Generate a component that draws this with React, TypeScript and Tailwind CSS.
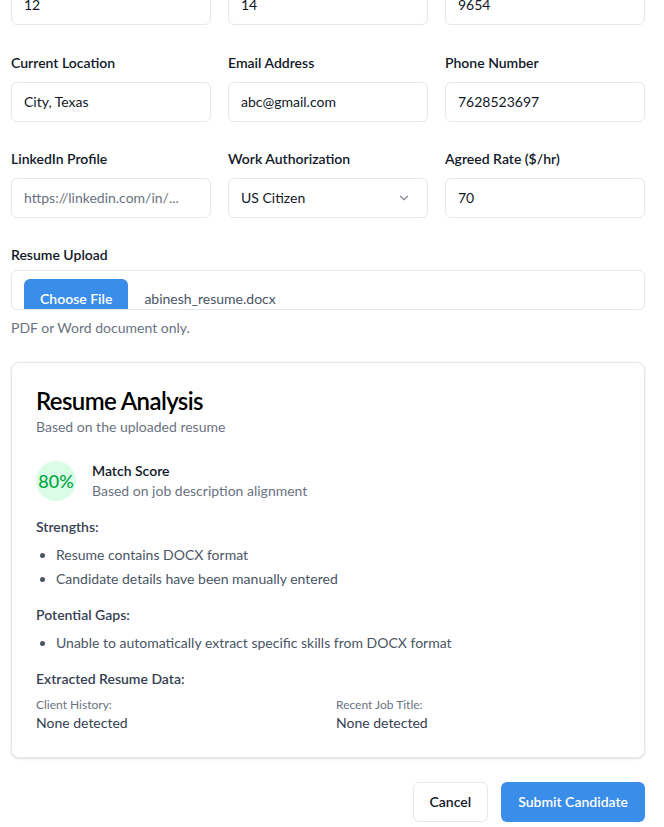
import { ChevronDown } from "lucide-react";

const FONT = "[font-family:'Segoe_UI',Lato,'Noto_Sans',sans-serif]";

function Field({ label, children }: { label: string; children: React.ReactNode }) {
  return (
    <div className="flex flex-col">
      <label className="text-sm font-semibold text-gray-900 leading-5 mb-[9px]">{label}</label>
      {children}
    </div>
  );
}

function TextBox({ value, placeholder }: { value?: string; placeholder?: string }) {
  return (
    <div className="h-10 rounded-md border border-gray-200 bg-white px-3 flex items-center text-sm">
      {value ? (
        <span className="text-gray-900">{value}</span>
      ) : (
        <span className="text-gray-500">{placeholder}</span>
      )}
    </div>
  );
}

const strengths = ["Resume contains DOCX format", "Candidate details have been manually entered"];
const gaps = ["Unable to automatically extract specific skills from DOCX format"];

export default function App() {
  return (
    <div className={`min-h-screen bg-white ${FONT} text-gray-900 overflow-hidden`}>
      <div className="w-[634px] ml-[11px]">
        {/* Top row, scrolled partly out of view */}
        <div className="grid grid-cols-3 gap-x-[17px] -mt-[15px]">
          <TextBox value="12" />
          <TextBox value="14" />
          <TextBox value="9654" />
        </div>

        <div className="grid grid-cols-3 gap-x-[17px] gap-y-[27px] mt-7">
          <Field label="Current Location">
            <TextBox value="City, Texas" />
          </Field>
          <Field label="Email Address">
            <TextBox value="abc@gmail.com" />
          </Field>
          <Field label="Phone Number">
            <TextBox value="7628523697" />
          </Field>
          <Field label="LinkedIn Profile">
            <TextBox placeholder="https://linkedin.com/in/..." />
          </Field>
          <Field label="Work Authorization">
            <div className="h-10 rounded-md border border-gray-200 bg-white px-3 flex items-center justify-between text-sm">
              <span>US Citizen</span>
              <ChevronDown className="h-3.5 w-3.5 mr-1 opacity-50" />
            </div>
          </Field>
          <Field label="Agreed Rate ($/hr)">
            <TextBox value="70" />
          </Field>
        </div>

        {/* Resume upload */}
        <div className="mt-[27px]">
          <label className="block text-sm font-semibold leading-5 mb-[5px]">Resume Upload</label>
          <div className="h-10 rounded-md border border-gray-200 bg-white overflow-hidden flex items-start px-3 pt-2 text-sm">
            <span className="h-10 px-4 rounded-md bg-[#3b8dea] text-white font-semibold flex items-center">Choose File</span>
            <span className="ml-4 mt-[10px] text-gray-600">abinesh_resume.docx</span>
          </div>
          <p className="mt-2 text-sm text-gray-500 leading-5">PDF or Word document only.</p>
        </div>

        {/* Analysis card */}
        <div className="mt-6 rounded-lg border border-gray-200 bg-white shadow-sm">
          <div className="p-6 flex flex-col gap-1.5">
            <h2 className="text-2xl font-semibold leading-none tracking-tight text-black mt-0.5 -mb-0.5">Resume Analysis</h2>
            <p className="text-sm text-gray-500 leading-5">Based on the uploaded resume</p>
          </div>
          <div className="px-6 pb-6 flex flex-col gap-4">
            <div className="flex items-center gap-4">
              <div className="h-10 w-10 rounded-full bg-green-100 flex items-center justify-center text-lg font-medium text-green-600 shrink-0">
                80%
              </div>
              <div>
                <p className="text-sm font-semibold leading-5">Match Score</p>
                <p className="text-sm text-gray-500 leading-5">Based on job description alignment</p>
              </div>
            </div>

            <div>
              <p className="text-sm font-semibold text-gray-700 leading-5 mb-2">Strengths:</p>
              <ul className="list-disc pl-5 space-y-1 text-sm text-gray-600 leading-5">
                {strengths.map((s) => (
                  <li key={s}>{s}</li>
                ))}
              </ul>
            </div>

            <div>
              <p className="text-sm font-semibold text-gray-700 leading-5 mb-2">Potential Gaps:</p>
              <ul className="list-disc pl-5 space-y-1 text-sm text-gray-600 leading-5">
                {gaps.map((s) => (
                  <li key={s}>{s}</li>
                ))}
              </ul>
            </div>

            <div>
              <p className="text-sm font-semibold text-gray-700 leading-5 mb-2">Extracted Resume Data:</p>
              <div className="grid grid-cols-2 gap-4">
                <div>
                  <p className="text-xs text-gray-500 leading-4">Client History:</p>
                  <p className="text-sm text-gray-700 leading-5">None detected</p>
                </div>
                <div>
                  <p className="text-xs text-gray-500 leading-4">Recent Job Title:</p>
                  <p className="text-sm text-gray-700 leading-5">None detected</p>
                </div>
              </div>
            </div>
          </div>
        </div>

        {/* Actions */}
        <div className="mt-6 flex justify-end gap-[13px]">
          <button className="h-10 px-4 rounded-md border border-gray-200 bg-white text-sm font-semibold text-gray-900">
            Cancel
          </button>
          <button className="h-10 px-[17px] rounded-md bg-[#3b8dea] text-sm font-semibold text-white">
            Submit Candidate
          </button>
        </div>
      </div>
    </div>
  );
}
